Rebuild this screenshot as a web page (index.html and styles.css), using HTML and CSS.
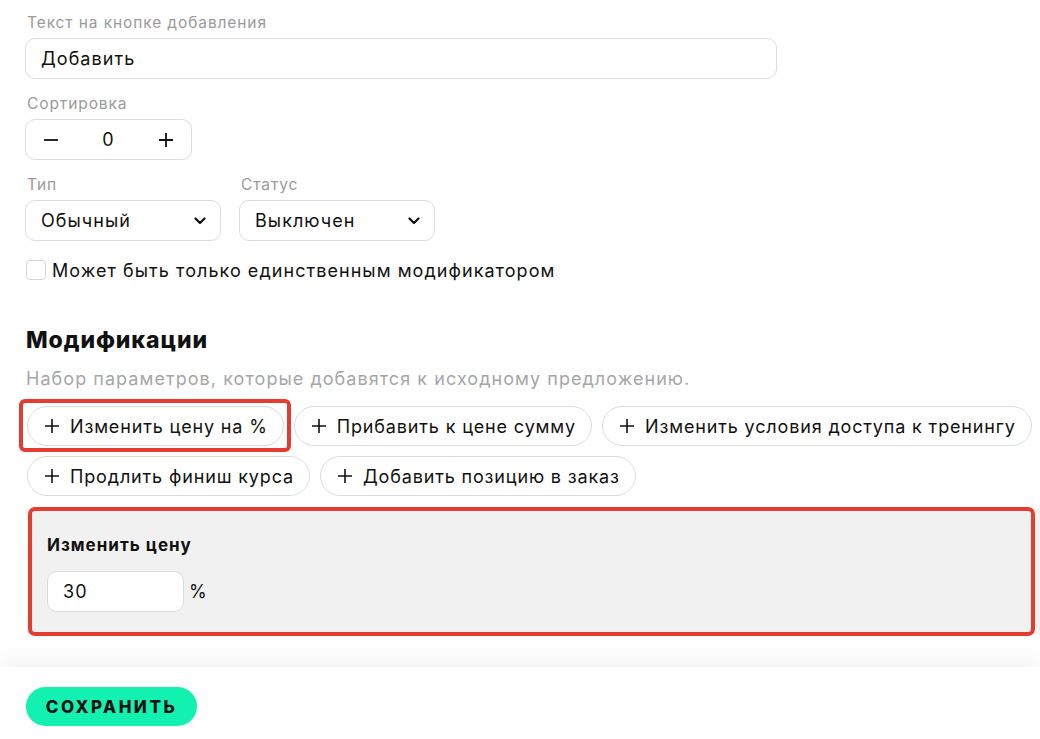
FILE: index.html
```html
<!DOCTYPE html>
<html>
<head>
    <meta charset="utf-8">
    <link rel="stylesheet" href="styles.css">
</head>
<body>
    <div class="editor">
        <div class="field">
            <div class="label">Текст на кнопке добавления</div>
            <div class="input wide">Добавить</div>
        </div>

        <div class="field">
            <div class="label">Сортировка</div>
            <div class="stepper">
                <span class="step">
                    <svg width="16" height="16" viewBox="0 0 16 16"><path d="M1 8h14" stroke="#111" stroke-width="1.8"/></svg>
                </span>
                <span class="step-value">0</span>
                <span class="step">
                    <svg width="16" height="16" viewBox="0 0 16 16"><path d="M1 8h14M8 1v14" stroke="#111" stroke-width="1.8"/></svg>
                </span>
            </div>
        </div>

        <div class="field-row">
            <div class="field">
                <div class="label">Тип</div>
                <div class="select">
                    <span>Обычный</span>
                    <svg class="chevron" width="12" height="8" viewBox="0 0 12 8"><path d="M1.5 1.5l4.5 4.5 4.5-4.5" fill="none" stroke="#111" stroke-width="2.2" stroke-linecap="round" stroke-linejoin="round"/></svg>
                </div>
            </div>
            <div class="field">
                <div class="label">Статус</div>
                <div class="select">
                    <span>Выключен</span>
                    <svg class="chevron" width="12" height="8" viewBox="0 0 12 8"><path d="M1.5 1.5l4.5 4.5 4.5-4.5" fill="none" stroke="#111" stroke-width="2.2" stroke-linecap="round" stroke-linejoin="round"/></svg>
                </div>
            </div>
        </div>

        <label class="check">
            <span class="box"></span>
            Может быть только единственным модификатором
        </label>

        <h2 class="section-title">Модификации</h2>
        <p class="section-hint">Набор параметров, которые добавятся к исходному предложению.</p>

        <div class="chips">
            <button class="chip marked">
                <svg width="14" height="14" viewBox="0 0 14 14"><path d="M0 7h14M7 0v14" stroke="#111" stroke-width="1.6"/></svg>
                Изменить цену на %
            </button>
            <button class="chip">
                <svg width="14" height="14" viewBox="0 0 14 14"><path d="M0 7h14M7 0v14" stroke="#111" stroke-width="1.6"/></svg>
                Прибавить к цене сумму
            </button>
            <button class="chip">
                <svg width="14" height="14" viewBox="0 0 14 14"><path d="M0 7h14M7 0v14" stroke="#111" stroke-width="1.6"/></svg>
                Изменить условия доступа к тренингу
            </button>
            <button class="chip">
                <svg width="14" height="14" viewBox="0 0 14 14"><path d="M0 7h14M7 0v14" stroke="#111" stroke-width="1.6"/></svg>
                Продлить финиш курса
            </button>
            <button class="chip">
                <svg width="14" height="14" viewBox="0 0 14 14"><path d="M0 7h14M7 0v14" stroke="#111" stroke-width="1.6"/></svg>
                Добавить позицию в заказ
            </button>
        </div>

        <div class="mod-panel">
            <div class="mod-title">Изменить цену</div>
            <div class="mod-row">
                <div class="input short">30</div>
                <span class="unit">%</span>
            </div>
        </div>
    </div>

    <div class="footer">
        <button class="save-btn">Сохранить</button>
    </div>
</body>
</html>
```

FILE: styles.css
```css
*,
*::after {
    margin: 0;
    padding: 0;
    box-sizing: border-box;
}

body {
    background: #fff;
    color: #111;
    font-family: Inter, "Noto Sans", sans-serif;
    font-size: 18px;
    letter-spacing: 1.05px;
    overflow: hidden;
}

.editor {
    padding: 13px 0 33px 25px;
}

.field {
    margin-bottom: 15px;
}

.label {
    font-size: 15.5px;
    line-height: 20px;
    color: #9a9a9a;
    margin-bottom: 5px;
    padding-left: 2px;
    letter-spacing: 0.9px;
}

.input {
    height: 41px;
    display: flex;
    align-items: center;
    padding: 0 15px;
    background: #fff;
    border: 1px solid #dcdcdc;
    border-radius: 10px;
}

.input.wide {
    width: 752px;
}

.input.short {
    width: 137px;
}

.stepper {
    width: 167px;
    height: 41px;
    display: flex;
    align-items: center;
    justify-content: space-between;
    padding: 0 17px;
    border: 1px solid #dcdcdc;
    border-radius: 10px;
}

.step {
    display: flex;
}

.field-row {
    display: flex;
    gap: 18px;
}

.select {
    width: 196px;
    height: 41px;
    display: flex;
    align-items: center;
    justify-content: space-between;
    padding: 0 14px 0 15px;
    border: 1px solid #dcdcdc;
    border-radius: 10px;
}

.check {
    display: flex;
    align-items: center;
    gap: 6px;
    height: 20px;
    margin-top: 4px;
    padding-left: 1px;
}

.box {
    width: 20px;
    height: 20px;
    border: 1px solid #d6d6d6;
    border-radius: 4px;
}

.section-title {
    margin-top: 46px;
    font-size: 23px;
    line-height: 28px;
    font-weight: 800;
    letter-spacing: 0.9px;
    padding-left: 1px;
}

.section-hint {
    margin-top: 14px;
    font-size: 18px;
    line-height: 22px;
    color: #a6a6a6;
    padding-left: 1px;
}

.chips {
    display: flex;
    flex-wrap: wrap;
    gap: 10px;
    margin-top: 16px;
    padding-left: 2px;
}

.chip {
    position: relative;
    height: 40px;
    display: flex;
    align-items: center;
    gap: 11px;
    padding: 0 15px 0 17px;
    background: #fff;
    border: 1px solid #dcdcdc;
    border-radius: 20px;
    font: inherit;
    color: inherit;
    letter-spacing: 0.85px;
    white-space: nowrap;
}

/* red highlight frame drawn over the chip */
.chip.marked::after {
    content: "";
    position: absolute;
    left: -9px;
    top: -8px;
    right: -8px;
    bottom: -7px;
    border: 4px solid #e33c31;
    border-radius: 6px;
}

.mod-panel {
    position: relative;
    margin: 13px 0 0 2px;
    padding: 25px 20px 22px;
    background: #f1f1f1;
}

.mod-panel::after {
    content: "";
    position: absolute;
    left: 1px;
    top: -2px;
    width: 1007px;
    height: 129px;
    border: 4px solid #e33c31;
    border-radius: 7px;
}

.mod-title {
    font-size: 17px;
    line-height: 22px;
    font-weight: 700;
    letter-spacing: 1px;
}

.mod-row {
    display: flex;
    align-items: center;
    gap: 5px;
    margin-top: 15px;
}

.footer {
    height: 72px;
    padding: 20px 26px;
    background: #fff;
    box-shadow: 0 -6px 22px rgba(0, 0, 0, 0.06);
}

.save-btn {
    width: 171px;
    height: 39px;
    border: none;
    border-radius: 20px;
    background: #13f1b1;
    color: #111;
    font-family: inherit;
    font-size: 17px;
    font-weight: 800;
    letter-spacing: 2.5px;
    text-transform: uppercase;
}
```
